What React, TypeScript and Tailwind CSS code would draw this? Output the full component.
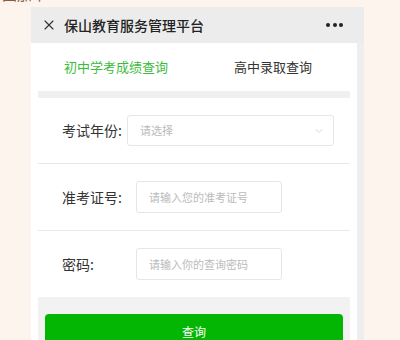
import { X, ChevronDown } from 'lucide-react';

interface FieldProps {
  label: string;
  placeholder: string;
  labelWidth: string;
}

const Field = ({ label, placeholder, labelWidth }: FieldProps) => (
  <div className="flex h-[66px] items-center pl-[24px]">
    <div className={`${labelWidth} text-[14px] text-[#333]`}>{label}</div>
    <div className="flex h-[32px] w-[146px] items-center rounded-[3px] border border-[#e6e6e6] pl-[12px] text-[11px] text-[#bbb]">
      {placeholder}
    </div>
  </div>
);

const Divider = () => <div className="h-px bg-[#e8e8e8]" />;

const App = () => {
  return (
    <div
      className="h-[340px] w-[400px] overflow-hidden bg-[#fdf4ee]"
      style={{ fontFamily: '"Noto Sans CJK SC", "Noto Sans", sans-serif' }}
    >
      <div className="h-[7px] overflow-hidden">
        <div className="-mt-[15px] pl-[2px] text-[15px] leading-[18px] text-[#8a5a3a]">国加平</div>
      </div>
      <div className="ml-[31px] flex w-[333px] flex-col">
        <div className="flex h-[36px] items-center bg-[#ececec] pl-[10px] pr-[21px]">
          <X size={16} strokeWidth={1.7} className="text-[#333]" />
          <div className="ml-[7px] flex-1 text-[14px] font-medium text-[#222]">保山教育服务管理平台</div>
          <div className="flex gap-[2.5px]">
            <span className="h-[4px] w-[4px] rounded-full bg-[#222]" />
            <span className="h-[4px] w-[4px] rounded-full bg-[#222]" />
            <span className="h-[4px] w-[4px] rounded-full bg-[#222]" />
          </div>
        </div>
        <div className="flex">
          <div className="w-[326px] bg-white px-[7px]">
            <div className="flex h-[48px] items-center text-[13px]">
              <div className="ml-[26px] w-[170px] text-[#3cbc3c]">初中学考成绩查询</div>
              <div className="text-[#333]">高中录取查询</div>
            </div>
            <div className="h-[7px] bg-[#f0f0f0]" />
            <div className="flex h-[65px] items-center pl-[24px]">
              <div className="w-[65px] text-[14px] text-[#333]">考试年份:</div>
              <div className="flex h-[31px] w-[207px] items-center justify-between rounded-[3px] border border-[#e6e6e6] pl-[12px] pr-[8px] text-[11px] text-[#bbb]">
                <span>请选择</span>
                <ChevronDown size={12} strokeWidth={1.5} className="text-[#ccc]" />
              </div>
            </div>
            <Divider />
            <Field label="准考证号:" placeholder="请输入您的准考证号" labelWidth="w-[74px]" />
            <Divider />
            <Field label="密码:" placeholder="请输入你的查询密码" labelWidth="w-[74px]" />
            <div className="h-[44px] bg-[#f2f2f2] px-[7px] pt-[17px]">
              <div className="flex h-[40px] items-start justify-center rounded-[4px] bg-[#03b603] pt-[9px] text-[12px] text-white">
                查询
              </div>
            </div>
          </div>
          <div className="w-[7px] bg-[#eeeef0]" />
        </div>
      </div>
    </div>
  );
};

export default App;
